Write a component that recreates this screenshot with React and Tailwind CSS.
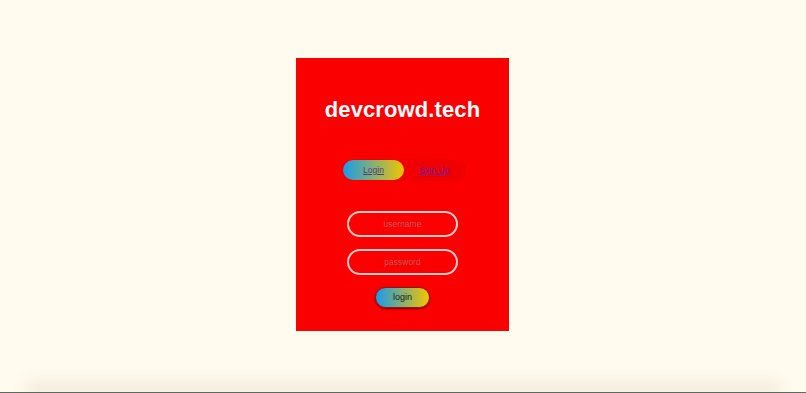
export default function App() {
  const font = { fontFamily: '"Liberation Sans", Arial, sans-serif' };
  return (
    <div className="relative h-[393px] w-[806px] overflow-hidden bg-[#fffbee]" style={font}>
      <div className="flex flex-col items-center pr-[1px] pt-[58px]">
        <div className="flex h-[273px] w-[213px] flex-col items-center bg-[#fb0000]">
          <h1 className="mt-[39px] text-[22px] font-bold leading-[26px] tracking-[0.1px] text-white">
            devcrowd.tech
          </h1>
          <div className="ml-[2px] mt-[36px] flex h-[22px] w-[125px] items-center rounded-full bg-[#f00000] px-[2px]">
            <a
              href="#"
              className="flex h-[20px] w-[61px] items-center justify-center rounded-full bg-[linear-gradient(to_right,#1a9ce8,#f2c400)] text-[8.5px] text-[#4e3a80] underline"
            >
              Login
            </a>
            <a href="#" className="ml-[15px] text-[8.5px] text-[#6a1fa0] underline">
              Sign Up
            </a>
          </div>
          <input
            placeholder="username"
            className="mt-[30px] h-[26px] w-[111px] rounded-full border-[2px] border-[#ffcccc] bg-transparent text-center text-[8.5px] outline-none placeholder:text-[#c45a5a]"
          />
          <input
            placeholder="password"
            type="password"
            className="mt-[12px] h-[26px] w-[111px] rounded-full border-[2px] border-[#ffcccc] bg-transparent text-center text-[8.5px] outline-none placeholder:text-[#c45a5a]"
          />
          <button className="mt-[12px] h-[21px] w-[55px] rounded-full border border-[#8a1a1a] bg-[linear-gradient(to_right,#1a9ce8,#f2c400)] text-[9px] text-[#1a1a1a] shadow-[0_1px_2px_rgba(0,0,0,0.5)]">
            login
          </button>
        </div>
      </div>
      <div className="absolute bottom-0 left-[30px] right-[30px] h-[1px] shadow-[0_-4px_16px_4px_rgba(110,100,60,0.16)]" />
      <div className="absolute bottom-0 left-0 h-[1px] w-full bg-[#666]" />
    </div>
  );
}
